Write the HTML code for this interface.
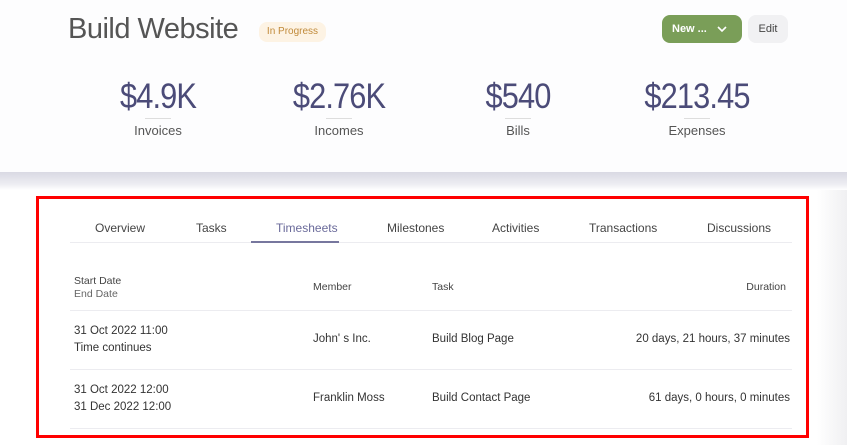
<!DOCTYPE html>
<html><head><style>
*{margin:0;padding:0;box-sizing:border-box}
body{width:847px;height:445px;overflow:hidden;background:#fff;font-family:"Liberation Sans",sans-serif;position:relative;color:#444}
.a{position:absolute;white-space:nowrap}
.top{position:absolute;left:0;top:0;width:847px;height:172px;background:#fdfdfe}
.band{position:absolute;left:0;top:172px;width:847px;height:18px;background:linear-gradient(#d9d9e3,#eeeef3 70%,#fff)}
.stat{position:absolute;width:160px;text-align:center;top:78px}
.stat .v{font-size:35px;color:#4b4b78;letter-spacing:-1px;line-height:38px;transform:scaleX(0.88)}
.stat .u{width:26px;height:1px;background:#ddd;margin:2px auto 4px}
.stat .l{font-size:13px;color:#555}
.tab{position:absolute;top:221px;font-size:12px;color:#444}
.f{font-size:10.5px;color:#444}
.r{font-size:11.5px;color:#333}
.line{position:absolute;left:70px;width:722px;height:1px;background:#ececf0}
</style></head><body>
<div class="top"></div>
<div class="band"></div>
<div style="position:absolute;right:0;top:190px;width:30px;height:255px;background:linear-gradient(90deg,#fff,#f0f0f2)"></div>
<div class="a" style="left:68px;top:13px;font-size:29px;color:#555;letter-spacing:-0.5px">Build Website</div>
<div class="a" style="left:259px;top:22px;width:67px;height:20px;border-radius:8px;background:#fdf3e4;color:#c08a3a;font-size:10px;line-height:20px;text-align:center">In Progress</div>
<div class="a" style="left:662px;top:15px;width:80px;height:28px;border-radius:8px;background:#7a9e58;color:#fff;font-size:11px;font-weight:bold;line-height:28px;padding-left:10px">New ...<svg style="position:absolute;left:55px;top:11px" width="10" height="7" viewBox="0 0 10 7"><path d="M1 1l4 4 4-4" fill="none" stroke="#fff" stroke-width="1.6"/></svg></div>
<div class="a" style="left:748px;top:15px;width:40px;height:28px;border-radius:8px;background:#f1f1f3;color:#444;font-size:11px;line-height:28px;text-align:center">Edit</div>
<div class="stat" style="left:78px"><div class="v">$4.9K</div><div class="u"></div><div class="l">Invoices</div></div>
<div class="stat" style="left:259px"><div class="v">$2.76K</div><div class="u"></div><div class="l">Incomes</div></div>
<div class="stat" style="left:438px"><div class="v">$540</div><div class="u"></div><div class="l">Bills</div></div>
<div class="stat" style="left:617px"><div class="v">$213.45</div><div class="u"></div><div class="l">Expenses</div></div>
<div class="a" style="left:36px;top:196px;width:773px;height:242px;border:3px solid #f00"></div>
<div class="tab" style="left:95px">Overview</div>
<div class="tab" style="left:196px">Tasks</div>
<div class="tab" style="left:276px;color:#6a6a9a">Timesheets</div>
<div class="tab" style="left:387px">Milestones</div>
<div class="tab" style="left:492px">Activities</div>
<div class="tab" style="left:589px">Transactions</div>
<div class="tab" style="left:707px">Discussions</div>
<div class="line" style="top:242px"></div>
<div class="a" style="left:251px;top:241px;width:88px;height:2px;background:#77779e"></div>
<div class="a f" style="left:74px;top:275px">Start Date</div>
<div class="a f" style="left:74px;top:288px;color:#666">End Date</div>
<div class="a f" style="left:313px;top:281px">Member</div>
<div class="a f" style="left:432px;top:281px">Task</div>
<div class="a f" style="right:61px;top:281px">Duration</div>
<div class="line" style="top:310px"></div>
<div class="a r" style="left:74px;top:325px">31 Oct 2022 11:00</div>
<div class="a r" style="left:74px;top:342px">Time continues</div>
<div class="a r" style="left:313px;top:333px">John' s Inc.</div>
<div class="a r" style="left:432px;top:333px">Build Blog Page</div>
<div class="a r" style="right:57px;top:333px">20 days, 21 hours, 37 minutes</div>
<div class="line" style="top:369px"></div>
<div class="a r" style="left:74px;top:384px">31 Oct 2022 12:00</div>
<div class="a r" style="left:74px;top:401px">31 Dec 2022 12:00</div>
<div class="a r" style="left:313px;top:392px">Franklin Moss</div>
<div class="a r" style="left:432px;top:392px">Build Contact Page</div>
<div class="a r" style="right:57px;top:392px">61 days, 0 hours, 0 minutes</div>
<div class="line" style="top:428px"></div>
</body></html>
